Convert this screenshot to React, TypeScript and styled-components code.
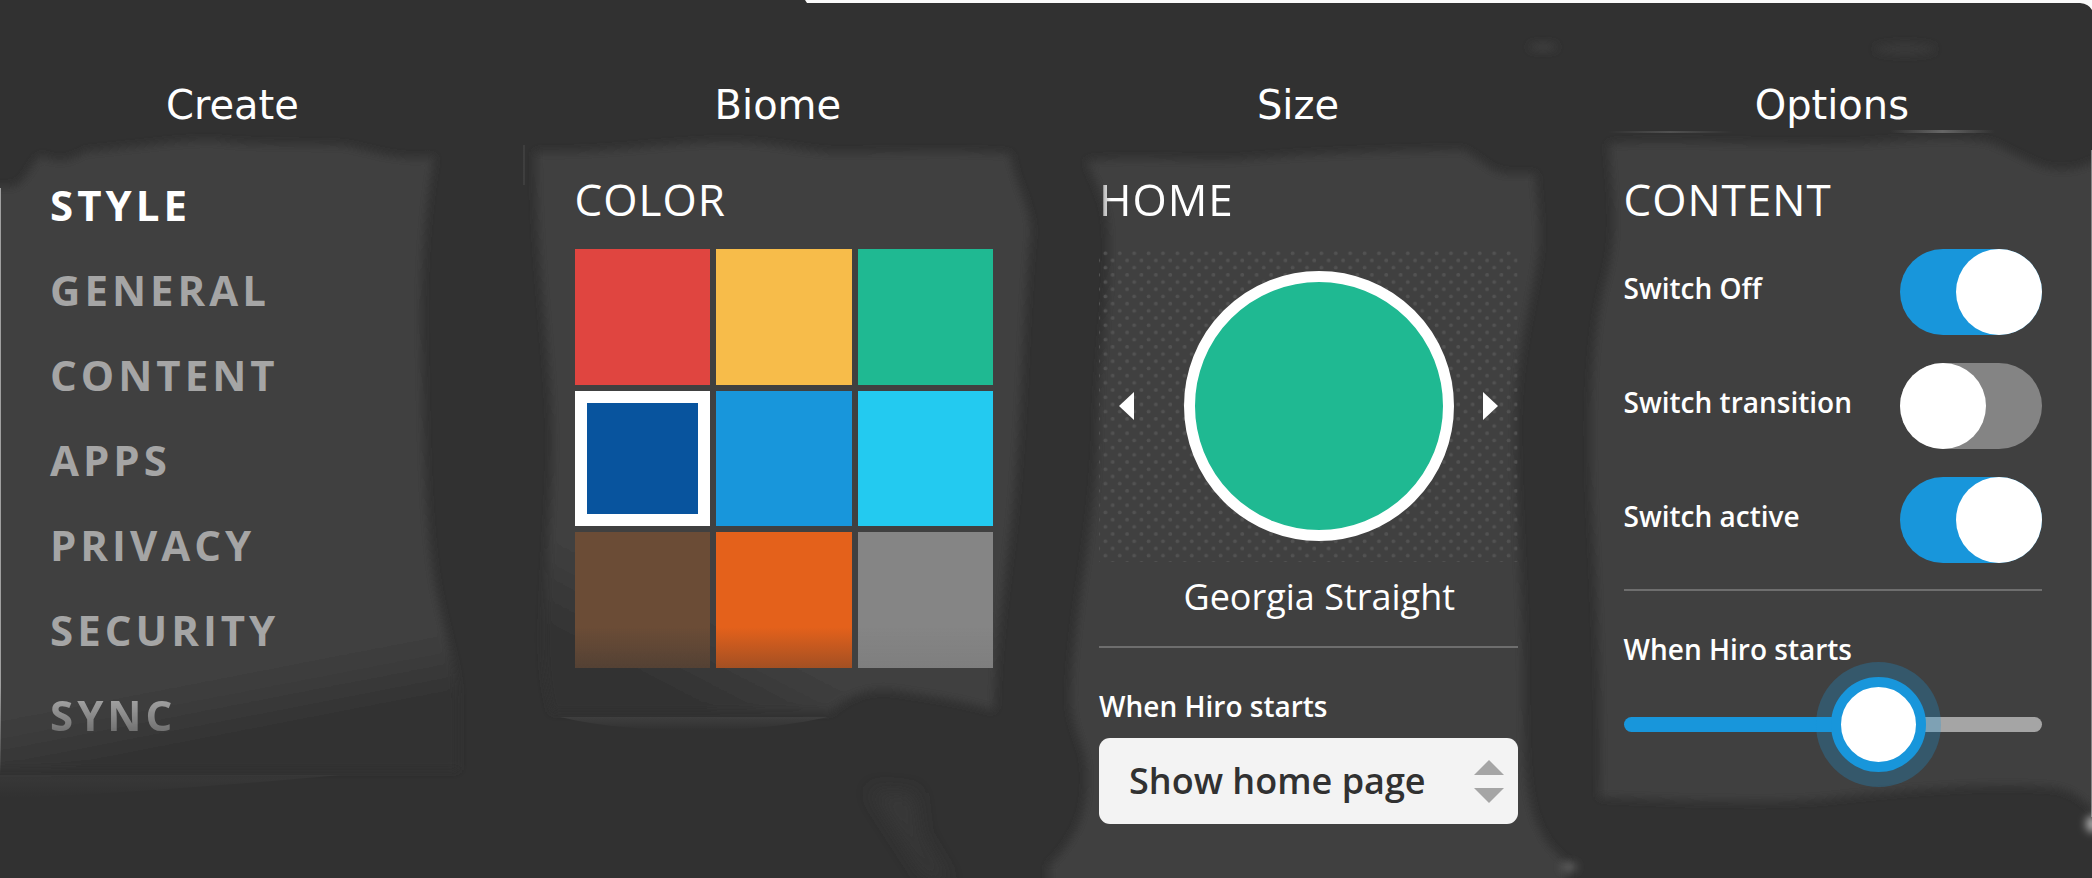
import React, { useState } from 'react';
import styled, { createGlobalStyle } from 'styled-components';

const color = {
  base: '#313131',
  panel: '#3f3f3f',
  line: '#6e6e6e',
  muted: '#a5a5a5',
  off: '#848484',
  blue: '#1896db',
  green: '#1fb992',
  white: '#ffffff',
};

const GlobalStyle = createGlobalStyle`
  *, *::before, *::after { box-sizing: border-box; }
  body {
    margin: 0;
    background: ${color.base};
    color: ${color.white};
    font-family: 'Open Sans', 'Noto Sans', sans-serif;
  }
`;

const Page = styled.div`
  position: relative;
  min-height: 100vh;
  overflow: hidden;
`;

const BackdropArt = styled.svg`
  position: absolute;
  inset: 0;
  width: 100%;
  height: 100%;
  pointer-events: none;
`;

const Header = styled.header`
  position: relative;
  display: flex;
  justify-content: space-between;
  padding: 81px 183px 0 166px;
`;

const Title = styled.h1`
  margin: 0;
  font: 400 40px/48px 'DejaVu Sans', Verdana, sans-serif;
`;

const Columns = styled.main`
  position: relative;
  display: grid;
  grid-template-columns: repeat(4, minmax(0, 1fr));
  column-gap: 106px;
  padding: 40px 50px 0;
`;

const Heading = styled.h2<{ $worn?: boolean }>`
  margin: 0 0 20px;
  font-size: 44px;
  font-weight: 400;
  line-height: 60px;
  letter-spacing: 1px;
  ${(p) => p.$worn && 'mask-image: linear-gradient(to right, rgba(0, 0, 0, 0.4), #000 12px);'}
`;

const Menu = styled.nav`
  display: flex;
  flex-direction: column;
  align-items: flex-start;
  gap: 25px;
  padding-top: 6px;
`;

const MenuLink = styled.a<{ $active?: boolean; $fading?: boolean }>`
  color: ${(p) => (p.$active ? color.white : color.muted)};
  font-size: 42px;
  font-weight: 700;
  line-height: 60px;
  letter-spacing: 4px;
  text-decoration: none;
  ${(p) => p.$fading && 'mask-image: linear-gradient(#000 20%, rgba(0, 0, 0, 0.5) 80%);'}
`;

const Swatches = styled.fieldset`
  display: grid;
  grid-template-columns: repeat(3, minmax(0, 1fr));
  gap: 6px;
  margin: 0;
  padding: 0;
  border: 0;
`;

const Swatch = styled.input<{ $fill: string; $shade: number }>`
  appearance: none;
  width: 100%;
  aspect-ratio: 1;
  margin: 0;
  background: linear-gradient(transparent 70%, rgba(49, 49, 49, ${(p) => p.$shade})), ${(p) => p.$fill};
  cursor: pointer;

  &:checked {
    border: 12px solid ${color.white};
  }
`;

const Stage = styled.div`
  position: relative;
  display: flex;
  align-items: center;
  justify-content: space-between;
  height: 313px;
  padding: 0 20px;
`;

const Dots = styled.svg`
  position: absolute;
  inset: 0;
  width: 100%;
  height: 100%;
`;

const Preview = styled.div`
  position: relative;
  width: 270px;
  height: 270px;
  margin-left: 22px;
  border: 11px solid ${color.white};
  border-radius: 50%;
  background: ${color.green};
`;

const ArrowButton = styled.button`
  position: relative;
  padding: 0;
  border: 0;
  background: none;
  color: ${color.white};
  cursor: pointer;

  svg {
    display: block;
  }
`;

const Caption = styled.p`
  margin: 11px 0 25px;
  padding-left: 22px;
  font-size: 36px;
  line-height: 48px;
  text-align: center;
`;

const Divider = styled.hr`
  height: 2px;
  margin: 0 0 38px;
  border: 0;
  background: ${color.line};
`;

const Label = styled.label`
  display: block;
  font-size: 28px;
  font-weight: 600;
  line-height: 40px;
`;

const SelectBox = styled.div`
  position: relative;
  margin-top: 12px;
`;

const Select = styled.select`
  appearance: none;
  display: block;
  width: 100%;
  height: 86px;
  padding: 0 72px 0 30px;
  border: 0;
  border-radius: 11px;
  background: #f3f3f3;
  color: ${color.base};
  font: 600 36px/48px 'Open Sans', sans-serif;
`;

const Stepper = styled.svg`
  position: absolute;
  top: 22px;
  right: 14px;
  pointer-events: none;
`;

const Switches = styled.div`
  display: flex;
  flex-direction: column;
  gap: 28px;
  padding-bottom: 26px;
`;

const SwitchRow = styled.div`
  display: flex;
  align-items: center;
  justify-content: space-between;

  ${Label} {
    padding-bottom: 8px;
  }
`;

const Switch = styled.input`
  appearance: none;
  width: 142px;
  height: 86px;
  margin: 0;
  border-radius: 43px;
  background: ${color.off};
  cursor: pointer;

  &::before {
    content: '';
    display: block;
    width: 86px;
    height: 86px;
    border-radius: 50%;
    background: ${color.white};
  }

  &:checked {
    background: ${color.blue};
  }

  &:checked::before {
    margin-left: auto;
  }
`;

const Slider = styled.input`
  appearance: none;
  display: block;
  width: 100%;
  height: 95px;
  margin: 8px 0 0;
  background: none;
  cursor: pointer;

  &::-webkit-slider-runnable-track {
    height: 15px;
    border-radius: 8px;
    background: linear-gradient(to right, ${color.blue} var(--fill), ${color.muted} var(--fill));
  }

  &::-webkit-slider-thumb {
    appearance: none;
    width: 95px;
    height: 95px;
    margin-top: -40px;
    border: 10px solid ${color.blue};
    border-radius: 50%;
    background: ${color.white};
    box-shadow: 0 0 0 15px rgba(24, 150, 219, 0.28);
  }
`;

const menu = ['STYLE', 'GENERAL', 'CONTENT', 'APPS', 'PRIVACY', 'SECURITY', 'SYNC'];

const swatches = [
  { name: 'Red', fill: '#e04540', shade: 0 },
  { name: 'Yellow', fill: '#f7bc4a', shade: 0 },
  { name: 'Green', fill: '#1fb992', shade: 0 },
  { name: 'Navy', fill: '#08549e', shade: 0 },
  { name: 'Blue', fill: '#1896db', shade: 0 },
  { name: 'Cyan', fill: '#23caf0', shade: 0 },
  { name: 'Brown', fill: '#6b4c36', shade: 0.4 },
  { name: 'Orange', fill: '#e4611b', shade: 0.36 },
  { name: 'Grey', fill: '#858585', shade: 0.08 },
];

/* Brushed dark wash with lighter, soft-edged patches behind each column. */
function Backdrop() {
  return (
    <BackdropArt viewBox="0 0 2092 878" preserveAspectRatio="none" aria-hidden="true">
      <defs>
        <filter id="soft" x="-5%" y="-5%" width="110%" height="110%">
          <feGaussianBlur stdDeviation="4" />
        </filter>
        <filter id="spot" x="-200%" y="-400%" width="500%" height="900%">
          <feGaussianBlur stdDeviation="4" />
        </filter>
        <filter id="haze" x="-100%" y="-100%" width="300%" height="300%">
          <feGaussianBlur stdDeviation="9" />
        </filter>
        <linearGradient id="fadeOne" gradientUnits="userSpaceOnUse" x1="225" y1="675" x2="238" y2="742">
          <stop offset="0" stopColor="#3f3f3f" />
          <stop offset="0.5" stopColor="#393939" />
          <stop offset="1" stopColor="#313131" />
        </linearGradient>
        <linearGradient id="fadeTwo" gradientUnits="userSpaceOnUse" x1="740" y1="635" x2="700" y2="712">
          <stop offset="0" stopColor="#3f3f3f" />
          <stop offset="1" stopColor="#323232" />
        </linearGradient>
        <linearGradient id="edgeFade" x1="0" y1="0" x2="0" y2="1">
          <stop offset="0.85" stopColor="#a0a0a0" />
          <stop offset="1" stopColor="#a0a0a0" stopOpacity="0" />
        </linearGradient>
        <linearGradient id="streak" x1="0" y1="0" x2="1" y2="0">
          <stop offset="0" stopColor="#666" stopOpacity="0" />
          <stop offset="0.5" stopColor="#666" />
          <stop offset="1" stopColor="#666" stopOpacity="0" />
        </linearGradient>
        <linearGradient id="glow" x1="0" y1="0" x2="0" y2="1">
          <stop offset="0" stopColor="#424242" />
          <stop offset="1" stopColor="#313131" />
        </linearGradient>
      </defs>
      <path
        filter="url(#soft)"
        fill="url(#fadeOne)"
        d="M-20 187 L12 187 C28 183 32 160 42 156 C60 165 72 160 85 152 C130 148 180 140 215 141 C250 146 300 144 345 146 C375 152 400 162 434 157 C424 210 419 290 422 360 C424 450 425 530 436 590 C446 640 458 670 458 700 L458 770 L-20 770 Z"
      />
      <path
        filter="url(#soft)"
        fill="url(#fadeTwo)"
        d="M536 152 C590 154 650 146 700 143 C760 139 790 150 830 153 C890 153 950 150 1010 154 C1016 190 1034 210 1030 240 C1024 300 1022 400 1016 470 C1010 560 997 610 994 710 C960 700 920 694 890 690 C860 688 845 700 830 712 L552 712 C544 680 542 650 545 600 C548 540 554 470 552 420 C550 350 536 260 536 152 Z"
      />
      <path
        filter="url(#soft)"
        fill="#3f3f3f"
        d="M1087 161 C1140 156 1190 162 1240 160 C1300 154 1400 151 1462 150 C1480 158 1490 173 1508 174 L1535 174 C1537 210 1542 230 1537 262 C1530 310 1514 360 1515 439 C1516 520 1524 620 1523 700 C1525 760 1520 830 1567 862 L1567 900 L1049 900 L1049 866 C1070 845 1087 820 1087 780 C1088 745 1072 735 1071 700 C1072 620 1094 540 1098 439 C1098 370 1110 300 1109 240 C1108 200 1098 190 1087 161 Z"
      />
      <path
        filter="url(#soft)"
        fill="#3f3f3f"
        d="M1609 144 C1680 140 1740 146 1860 144 C1910 140 1960 136 1990 143 C2020 154 2035 170 2062 170 C2080 170 2090 164 2120 150 L2120 825 C2090 815 2085 790 2050 787 C1980 782 1900 790 1820 799 C1750 804 1660 799 1600 797 C1602 700 1597 600 1594 540 C1588 430 1590 340 1606 280 C1620 230 1612 190 1609 144 Z"
      />
      <rect x="0" y="188" width="1" height="586" fill="url(#edgeFade)" />
      <path d="M0 775 L340 775 C220 786 80 796 0 798 Z" fill="url(#glow)" opacity="0.4" />
      <path d="M560 717 L828 717 C760 733 640 736 560 717 Z" fill="url(#glow)" opacity="0.8" />
      <path filter="url(#haze)" fill="#393939" d="M870 790 L915 793 L920 835 L950 885 L925 875 Z" />
      <rect x="523" y="145" width="2" height="40" fill="url(#streak)" opacity="0.5" />
      <rect x="1608" y="131" width="125" height="2" fill="url(#streak)" opacity="0.6" />
      <rect x="1890" y="130" width="105" height="3" fill="url(#streak)" />
      <ellipse filter="url(#spot)" cx="1543" cy="47" rx="14" ry="3" fill="#444" />
      <ellipse filter="url(#spot)" cx="1905" cy="49" rx="30" ry="5" fill="#3b3b3b" />
      <rect x="2091" y="150" width="1" height="667" fill="#858585" />
      <ellipse filter="url(#spot)" cx="2093" cy="824" rx="7" ry="8" fill="#b0b0b0" />
      <ellipse filter="url(#spot)" cx="1569" cy="867" rx="8" ry="4" fill="#666" />
      <path d="M805 0 L2092 0 L2092 10 Q2089 4 2080 3 L807 3 Z" fill="#fafafa" />
    </BackdropArt>
  );
}

export default function App() {
  const [picked, setPicked] = useState('Navy');
  const [level, setLevel] = useState(64);
  const fill = { '--fill': `${level}%` } as React.CSSProperties;

  return (
    <Page>
      <GlobalStyle />
      <Backdrop />
      <Header>
        <Title>Create</Title>
        <Title>Biome</Title>
        <Title>Size</Title>
        <Title>Options</Title>
      </Header>
      <Columns>
        <Menu>
          {menu.map((item, i) => (
            <MenuLink
              key={item}
              href={`#${item.toLowerCase()}`}
              $active={i === 0}
              $fading={i === menu.length - 1}
            >
              {item}
            </MenuLink>
          ))}
        </Menu>

        <section>
          <Heading>COLOR</Heading>
          <Swatches aria-label="Color">
            {swatches.map((s) => (
              <Swatch
                key={s.name}
                type="radio"
                name="color"
                aria-label={s.name}
                $fill={s.fill}
                $shade={s.shade}
                checked={picked === s.name}
                onChange={() => setPicked(s.name)}
              />
            ))}
          </Swatches>
        </section>

        <section>
          <Heading $worn>HOME</Heading>
          <Stage>
            <Dots aria-hidden="true">
              <defs>
                <pattern id="dots" width="14.4" height="14.4" patternUnits="userSpaceOnUse">
                  <g fill="#525252">
                    <circle cx="6.4" cy="4.2" r="1.9" />
                    <circle cx="13.6" cy="11.4" r="1.9" />
                    <circle cx="-0.8" cy="11.4" r="1.9" />
                  </g>
                </pattern>
              </defs>
              <rect width="100%" height="100%" fill="url(#dots)" />
            </Dots>
            <ArrowButton type="button" aria-label="Previous">
              <svg width="15" height="28" viewBox="0 0 15 28" fill="currentColor">
                <path d="M15 0 V28 L0 14 Z" />
              </svg>
            </ArrowButton>
            <Preview />
            <ArrowButton type="button" aria-label="Next">
              <svg width="15" height="28" viewBox="0 0 15 28" fill="currentColor">
                <path d="M0 0 V28 L15 14 Z" />
              </svg>
            </ArrowButton>
          </Stage>
          <Caption>Georgia Straight</Caption>
          <Divider />
          <Label htmlFor="startup">When Hiro starts</Label>
          <SelectBox>
            <Select id="startup" defaultValue="home">
              <option value="home">Show home page</option>
            </Select>
            <Stepper width="30" height="44" viewBox="0 0 30 44" fill={color.muted} aria-hidden="true">
              <path d="M15 0 L30 15 H0 Z" />
              <path d="M0 28 H30 L15 43 Z" />
            </Stepper>
          </SelectBox>
        </section>

        <section>
          <Heading>CONTENT</Heading>
          <Switches>
            <SwitchRow>
              <Label htmlFor="switch-off">Switch Off</Label>
              <Switch id="switch-off" type="checkbox" defaultChecked />
            </SwitchRow>
            <SwitchRow>
              <Label htmlFor="switch-transition">Switch transition</Label>
              <Switch id="switch-transition" type="checkbox" />
            </SwitchRow>
            <SwitchRow>
              <Label htmlFor="switch-active">Switch active</Label>
              <Switch id="switch-active" type="checkbox" defaultChecked />
            </SwitchRow>
          </Switches>
          <Divider />
          <Label htmlFor="level">When Hiro starts</Label>
          <Slider
            id="level"
            type="range"
            min="0"
            max="100"
            value={level}
            onChange={(e) => setLevel(Number(e.target.value))}
            style={fill}
          />
        </section>
      </Columns>
    </Page>
  );
}
